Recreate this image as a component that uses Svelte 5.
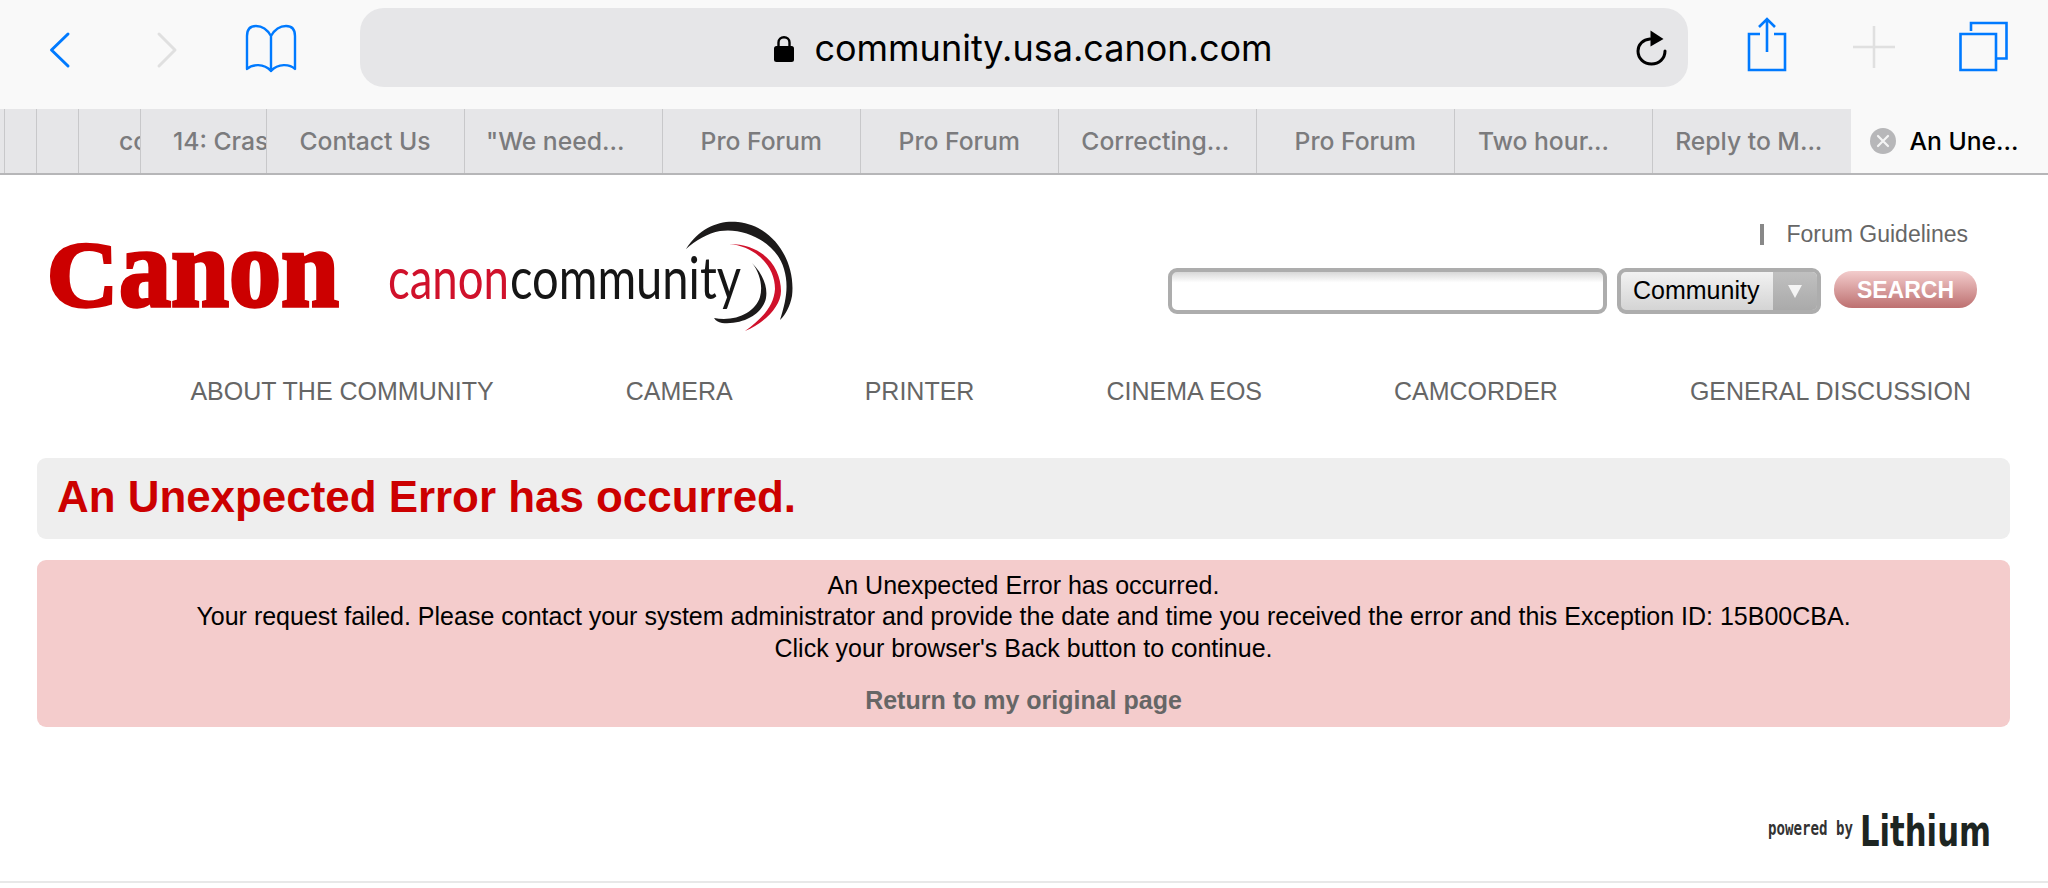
<script>
  // tab strip, widths are read off the screenshot
  const tabs = [
    { title: '', w: 5 },
    { title: '', w: 32 },
    { title: '', w: 42 },
    { title: 'community', w: 62, clip: 40 },
    { title: '14: Crash', w: 125.5, clip: 32 },
    { title: 'Contact Us', w: 198 },
    { title: '"We need...', w: 198.5, right: 16 },
    { title: 'Pro Forum', w: 197.5 },
    { title: 'Pro Forum', w: 198.5 },
    { title: 'Correcting...', w: 197.5, right: 4 },
    { title: 'Pro Forum', w: 198.5 },
    { title: 'Two hour...', w: 198, right: 20 },
    { title: 'Reply to M...', w: 197.5, right: 6 }
  ];
  const navItems = ['ABOUT THE COMMUNITY', 'CAMERA', 'PRINTER', 'CINEMA EOS', 'CAMCORDER', 'GENERAL DISCUSSION'];
</script>

<div class="page">
  <div class="toolbar">
    <svg class="tool-icons" viewBox="0 0 360 109" aria-hidden="true">
      <path class="blue" d="M68 34 L51.5 50 L68 66" />
      <path class="off" d="M159 34 L175 50 L159 66" />
      <path class="blue thin" d="M271 36 C267 29 261 26 256 26 C250 26 247 30 247 36 L247 69 C252 64 264 63 271 71 C278 63 290 64 295 69 L295 36 C295 30 292 26 286 26 C281 26 275 29 271 36 Z M271 36 L271 71" />
    </svg>

    <div class="urlbar">
      <div></div>
      <div class="url">
        <svg class="lock" viewBox="0 0 20 26" aria-hidden="true">
          <rect x="0" y="10" width="20" height="16" rx="2.5" />
          <path d="M4.5 11 L4.5 6.5 C4.5 3 7 1.2 10 1.2 C13 1.2 15.5 3 15.5 6.5 L15.5 11" fill="none" stroke="#000" stroke-width="2.4" />
        </svg>
        <span>community.usa.canon.com</span>
      </div>
      <svg class="reload" viewBox="0 0 32 36" aria-hidden="true">
        <path d="M14 9 C7 9.5 2 14.5 2 21 C2 28.5 8 34 15.5 34 C23 34 29 28.5 29 21" fill="none" stroke="#000" stroke-width="3" stroke-linecap="round" />
        <path d="M14.5 0.5 L27.5 9 L14.5 16.5 Z" />
      </svg>
    </div>

    <svg class="tool-icons" viewBox="1688 0 360 109" aria-hidden="true">
      <path class="blue square" d="M1760 34 L1749 34 L1749 70 L1785 70 L1785 34 L1774 34" />
      <path class="blue square thin" d="M1767 52 L1767 20 M1759 27 L1767 19 L1775 27" />
      <path class="off square thin" d="M1853 47 L1895 47 M1874 26 L1874 68" />
      <path class="blue square" d="M1960.5 34 L1996 34 L1996 70 L1960.5 70 Z" />
      <path class="blue square" d="M1971 31 L1971 23 L2006.5 23 L2006.5 58.5 L1997 58.5" />
    </svg>
  </div>

  <div class="tabs">
    {#each tabs as t}
      <div class="tab" class:clipped={t.clip} style="width: {t.w}px; padding-left: {t.clip || 0}px; padding-right: {t.right || 0}px">{t.title}</div>
    {/each}
    <div class="tab active">
      <svg class="close" viewBox="0 0 26 26" aria-hidden="true">
        <circle cx="13" cy="13" r="13" fill="#b7b7b9" />
        <path d="M8 8 L18 18 M18 8 L8 18" stroke="#f4f4f4" stroke-width="2.2" stroke-linecap="round" />
      </svg>
      <span>An Une...</span>
    </div>
  </div>

  <header class="head">
    <svg class="logo" width="300" height="120" viewBox="46 215 300 120" role="img" aria-label="Canon">
      <text class="canon" x="47" y="305" font-size="94" textLength="71" lengthAdjust="spacingAndGlyphs">C</text>
      <text class="canon" x="119" y="305" font-size="112" textLength="220" lengthAdjust="spacingAndGlyphs">anon</text>
    </svg>
    <svg class="logo" width="415" height="120" viewBox="386 215 415 120" role="img" aria-label="canon community">
      <text class="community red" x="388" y="298" textLength="121" lengthAdjust="spacingAndGlyphs">canon</text>
      <text class="community" x="510" y="298" textLength="231" lengthAdjust="spacingAndGlyphs">community</text>
      <path d="M686 248 C700 226 720 219 738 221 C775 225 796 262 792 295 C790 305 786 313 780 319 C786 300 789 285 784 268 C777 242 745 226 720 230 C708 232 695 240 686 248 Z" fill="#1c1a1a" />
      <path d="M729 243 C765 243 781 268 781 290 C781 305 765 322 745 330 C762 318 774 305 775 288 C775 265 755 245 729 243 Z" fill="#d0112b" />
      <path d="M752 262 C762 272 768 285 766 297 C763 312 745 324 722 322 C718 321 716 320 714 317 C735 321 755 312 760 296 C763 285 760 272 752 262 Z" fill="#1c1a1a" />
    </svg>

    <div class="tools">
      <div class="guidelines"><i></i>Forum Guidelines</div>
      <div class="search">
        <div class="input"></div>
        <div class="select">
          <span>Community</span>
          <b><em></em></b>
        </div>
        <div class="go">SEARCH</div>
      </div>
    </div>
  </header>

  <nav class="menu">
    {#each navItems as item}
      <span>{item}</span>
    {/each}
  </nav>

  <h1 class="title">An Unexpected Error has occurred.</h1>

  <div class="error">
    <div>An Unexpected Error has occurred.</div>
    <div>Your request failed. Please contact your system administrator and provide the date and time you received the error and this Exception ID: 15B00CBA.</div>
    <div>Click your browser's Back button to continue.</div>
    <div class="back">Return to my original page</div>
  </div>

  <footer class="foot">
    <svg width="240" height="50" viewBox="1760 805 240 50" role="img" aria-label="powered by Lithium">
      <text class="powered" x="1768" y="834" textLength="85" lengthAdjust="spacingAndGlyphs">powered by</text>
      <text class="lithium" x="1860" y="845" textLength="131" lengthAdjust="spacingAndGlyphs">Lithium</text>
    </svg>
  </footer>
</div>

<style>
  :global(body) {
    margin: 0;
    background: #fff;
  }

  .page {
    width: 2048px;
    height: 888px;
    overflow: hidden;
    font-family: "Liberation Sans", Arial, sans-serif;
  }

  .toolbar {
    display: flex;
    height: 109px;
    background: #f9f9f9;
  }

  .tool-icons {
    width: 360px;
    height: 109px;
    flex: none;
  }

  .tool-icons path {
    fill: none;
    stroke-width: 3;
    stroke-linecap: round;
    stroke-linejoin: round;
  }

  .tool-icons .thin {
    stroke-width: 2.4;
  }

  .tool-icons .square {
    stroke-width: 2.6;
    stroke-linecap: butt;
    stroke-linejoin: miter;
  }

  .blue {
    stroke: #007aff;
  }

  .off {
    stroke: #e0e0e0;
  }

  .urlbar {
    width: 1328px;
    height: 79px;
    margin-top: 8px;
    border-radius: 24px;
    background: #e6e6e8;
    display: grid;
    grid-template-columns: 1fr auto 1fr;
    align-items: center;
  }

  .url {
    display: flex;
    align-items: center;
    gap: 20px;
    font-family: Inter, sans-serif;
    font-size: 36px;
    color: #000;
    margin: 1px 0 0 -1px;
  }

  .lock {
    width: 20px;
    height: 26px;
    margin-top: 2px;
  }

  .reload {
    width: 32px;
    height: 36px;
    justify-self: end;
    margin-right: 20px;
  }

  .tabs {
    box-sizing: border-box;
    display: flex;
    height: 66px;
    background: #e6e6e8;
    border-bottom: 2px solid #b6b6b8;
  }

  .tab {
    box-sizing: border-box;
    flex: none;
    display: flex;
    align-items: center;
    justify-content: center;
    border-right: 1px solid #c8c8ca;
    font-family: Inter, sans-serif;
    font-size: 24.7px;
    font-weight: 500;
    color: #7b7b7d;
    white-space: nowrap;
    overflow: hidden;
  }

  .tab.clipped {
    justify-content: flex-start;
  }

  .tab:nth-last-child(2) {
    border-right: 0;
  }

  .tab.active {
    flex: 1;
    justify-content: flex-start;
    gap: 14px;
    padding-left: 19px;
    background: #f9f9f9;
    border-right: 0;
    color: #000;
  }

  .close {
    width: 26px;
    height: 26px;
    flex: none;
  }

  .head {
    display: flex;
    height: 196px;
    box-sizing: border-box;
    padding: 41px 71px 0 46px;
  }

  .logo {
    flex: none;
    overflow: visible;
  }

  .logo + .logo {
    margin-left: 40px;
  }

  .canon {
    font-family: "Liberation Serif", serif;
    font-weight: 700;
    fill: #cc0000;
    stroke: #cc0000;
    stroke-width: 3.5;
  }

  .community {
    font-family: Lato, sans-serif;
    font-weight: 400;
    font-size: 58px;
    fill: #151515;
  }

  .community.red {
    fill: #d0112b;
  }

  .tools {
    margin-left: auto;
    display: flex;
    flex-direction: column;
    align-items: flex-end;
  }

  .guidelines {
    display: flex;
    align-items: center;
    height: 36px;
    padding-right: 9px;
    font-size: 23px;
    color: #666;
  }

  .guidelines i {
    width: 4px;
    height: 21px;
    margin-right: 22px;
    background: #888;
  }

  .search {
    display: flex;
    align-items: flex-start;
    margin-top: 16px;
  }

  .input {
    box-sizing: border-box;
    width: 439px;
    height: 46px;
    border: 4px solid #adadad;
    border-radius: 9px;
    background: linear-gradient(#d8d8d8, #fff 28%);
  }

  .select {
    box-sizing: border-box;
    display: flex;
    width: 204px;
    height: 46px;
    margin-left: 10px;
    border: 4px solid #adadad;
    border-radius: 9px;
    overflow: hidden;
    background: linear-gradient(#f2f2f2, #d4d4d4);
    font-size: 25px;
    color: #000;
  }

  .select span {
    flex: 1;
    padding-left: 12px;
    line-height: 37px;
  }

  .select b {
    width: 44px;
    display: flex;
    align-items: center;
    justify-content: center;
    background: linear-gradient(#c0c0c0, #aaa);
  }

  .select em {
    width: 0;
    height: 0;
    border-left: 7px solid transparent;
    border-right: 7px solid transparent;
    border-top: 13px solid #f4f4f4;
  }

  .go {
    width: 143px;
    height: 37px;
    margin: 3px 0 0 13px;
    border-radius: 18px;
    background: linear-gradient(#f3cccc, #bd7070);
    color: #fff;
    font-size: 23px;
    font-weight: 700;
    line-height: 38px;
    text-align: center;
  }

  .menu {
    display: flex;
    justify-content: flex-end;
    gap: 132px;
    height: 40px;
    padding-right: 77px;
    font-size: 25px;
    line-height: 40px;
    color: #666;
    white-space: nowrap;
  }

  .title {
    margin: 47px 38px 0 37px;
    height: 81px;
    padding-left: 20px;
    border-radius: 9px;
    background: #eee;
    color: #cc0000;
    font-size: 43.9px;
    font-weight: 700;
    line-height: 78px;
  }

  .error {
    box-sizing: border-box;
    height: 167px;
    margin: 21px 38px 0 37px;
    padding-top: 10px;
    border-radius: 9px;
    background: #f4cccc;
    color: #000;
    font-size: 25px;
    line-height: 31.3px;
    text-align: center;
  }

  .back {
    margin-top: 21px;
    color: #666;
    font-weight: 700;
  }

  .foot {
    box-sizing: border-box;
    display: flex;
    justify-content: flex-end;
    height: 156px;
    padding: 79px 48px 0 0;
    border-bottom: 2px solid #e8e8e8;
  }

  .powered {
    font-family: "DejaVu Sans Mono", monospace;
    font-weight: 700;
    font-size: 19px;
    fill: #333;
  }

  .lithium {
    font-family: "DejaVu Sans", sans-serif;
    font-weight: 700;
    font-size: 42px;
    fill: #1d2522;
  }
</style>
